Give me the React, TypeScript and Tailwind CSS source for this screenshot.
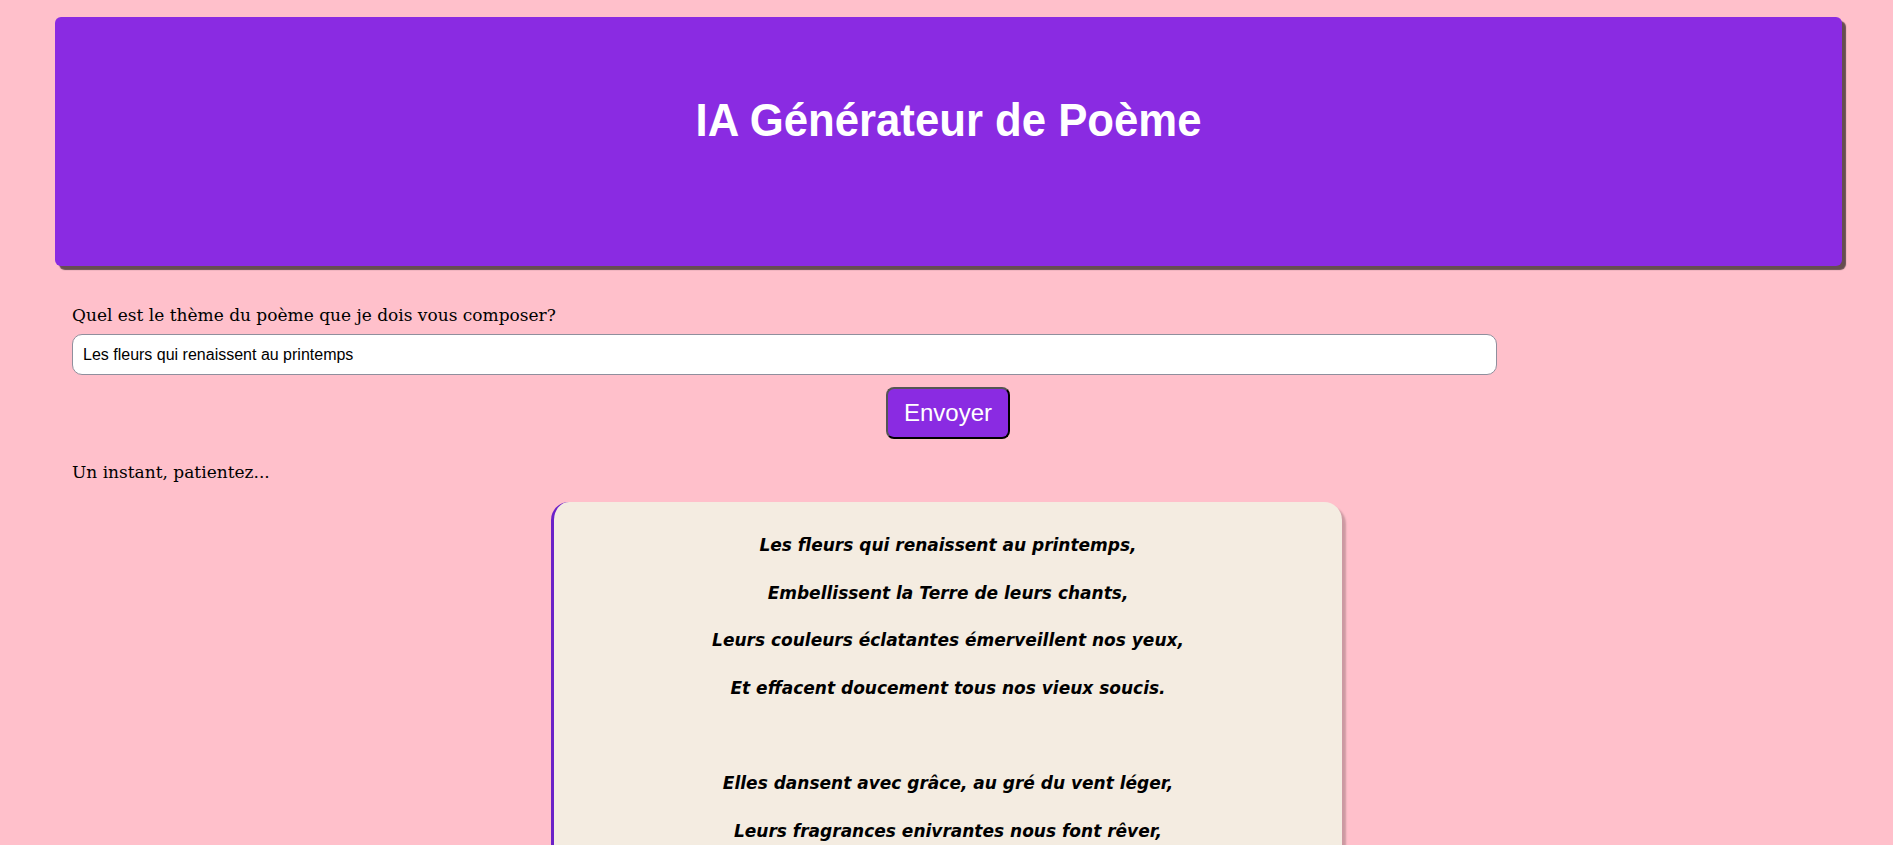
const poemLines = [
  "Les fleurs qui renaissent au printemps,",
  "Embellissent la Terre de leurs chants,",
  "Leurs couleurs éclatantes émerveillent nos yeux,",
  "Et effacent doucement tous nos vieux soucis.",
  "",
  "Elles dansent avec grâce, au gré du vent léger,",
  "Leurs fragrances enivrantes nous font rêver,",
  "Et dans chaque pétale, la vie se renouvelle,",
  "Promesse d'un été aux couleurs éternelles.",
];

export default function App() {
  return (
    <div className="h-screen overflow-hidden bg-[#ffc0cb] pt-[17px]">
      <header className="ml-[55px] mr-[51px] h-[249px] rounded-md bg-[#8a2be2] pt-[76px] shadow-[4px_4px_1px_rgba(0,0,0,0.6)]">
        {/* narrow bold face isn't installed, so squeeze Liberation Sans a bit */}
        <h1 className="scale-x-[0.95] text-center font-['Liberation_Sans',Arial,sans-serif] text-[46px] font-bold leading-[54px] text-white">
          IA Générateur de Poème
        </h1>
      </header>

      <main className="px-[72px]">
        <label
          htmlFor="theme"
          className="mt-[37px] block font-['DejaVu_Serif','Liberation_Serif',serif] text-[17px] leading-[24px] text-black"
        >
          Quel est le thème du poème que je dois vous composer?
        </label>
        <input
          id="theme"
          defaultValue="Les fleurs qui renaissent au printemps"
          className="mt-[7px] block h-[41px] w-[1425px] rounded-[10px] border border-[#8f8f9d] bg-white px-[10px] font-['Liberation_Sans',Arial,sans-serif] text-[16px] text-black outline-none"
        />

        <div className="mt-[12px] flex justify-center pl-[3px]">
          <button className="h-[52px] w-[124px] rounded-lg border-2 border-[#555] border-b-black border-r-black bg-[#8a2be2] font-['Liberation_Sans',Arial,sans-serif] text-[24px] text-white">
            Envoyer
          </button>
        </div>

        <p className="mt-[21px] font-['DejaVu_Serif','Liberation_Serif',serif] text-[17px] leading-[24px] text-black">
          Un instant, patientez...
        </p>

        <div className="mt-[18px] flex justify-center">
          <div className="w-[791px] rounded-[18px] border-l-[3px] border-[#6b21c8] bg-[#f4ece1] pt-[20px] pb-6 shadow-[4px_4px_2px_rgba(0,0,0,0.2)]">
            {poemLines.map((line, i) => (
              <div
                key={i}
                className="h-[47.6px] text-center font-['Comic_Sans_MS','DejaVu_Sans',sans-serif] text-[17px] font-bold italic leading-[47.6px] text-black"
              >
                {line}
              </div>
            ))}
          </div>
        </div>
      </main>
    </div>
  );
}
